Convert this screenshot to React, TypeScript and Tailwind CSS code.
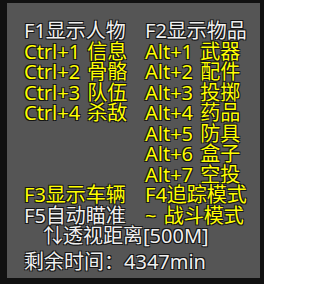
import React from 'react';

type Cell = { text: string; yellow?: boolean } | null;

const rows: [Cell, Cell][] = [
  [{ text: 'F1显示人物' }, { text: 'F2显示物品' }],
  [{ text: 'Ctrl+1 信息', yellow: true }, { text: 'Alt+1 武器', yellow: true }],
  [{ text: 'Ctrl+2 骨骼', yellow: true }, { text: 'Alt+2 配件', yellow: true }],
  [{ text: 'Ctrl+3 队伍', yellow: true }, { text: 'Alt+3 投掷', yellow: true }],
  [{ text: 'Ctrl+4 杀敌', yellow: true }, { text: 'Alt+4 药品', yellow: true }],
  [null, { text: 'Alt+5 防具', yellow: true }],
  [null, { text: 'Alt+6 盒子', yellow: true }],
  [null, { text: 'Alt+7 空投', yellow: true }],
  [{ text: 'F3显示车辆', yellow: true }, { text: 'F4追踪模式', yellow: true }],
  [{ text: 'F5自动瞄准' }, { text: '~ 战斗模式', yellow: true }],
];

const shadow =
  '[text-shadow:1px_1px_0_#151515,-1px_-1px_0_#151515,1px_-1px_0_#151515,-1px_1px_0_#151515]';

function Label({ cell }: { cell: Cell }) {
  if (!cell) return <span />;
  return (
    <span className={`whitespace-pre ${shadow} ${cell.yellow ? 'text-[#ffff00]' : 'text-[#f0f0f0]'}`}>
      {cell.text}
    </span>
  );
}

export default function App() {
  return (
    <div className="h-[284px] w-[264px] bg-[#111111] pl-[7px] pt-[3px]">
      <div
        className="h-[275px] w-[253px] bg-[#555555] pl-[17px] pt-[18px] text-[20px] leading-[20.5px] [word-spacing:2px]"
        style={{ fontFamily: '"Noto Sans", "Noto Sans CJK SC", sans-serif' }}
      >
        <div className="grid grid-cols-[121px_1fr]">
          {rows.map(([a, b], i) => (
            <React.Fragment key={i}>
              <Label cell={a} />
              <Label cell={b} />
            </React.Fragment>
          ))}
        </div>
        <div className={`pl-[19px] text-[#f0f0f0] ${shadow}`}>⇅透视距离[500M]</div>
        <div className={`mt-[5px] whitespace-pre text-[#f0f0f0] ${shadow}`}>剩余时间：4347min</div>
      </div>
    </div>
  );
}
